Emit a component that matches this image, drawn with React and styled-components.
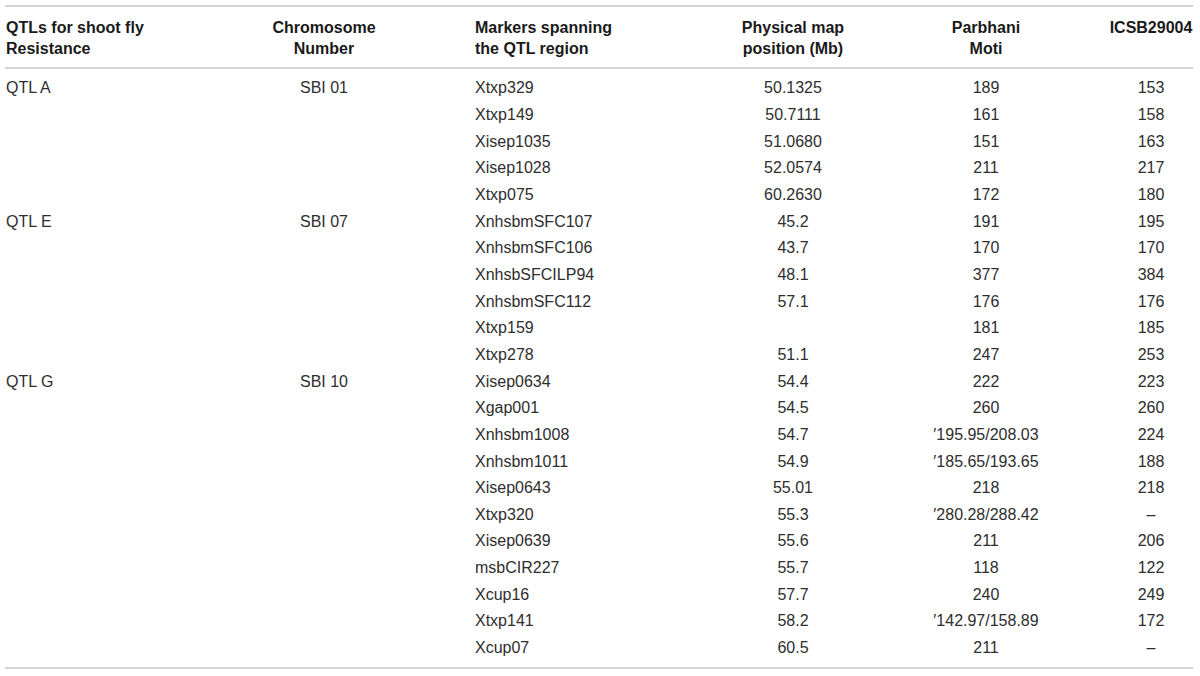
import React from "react";
import styled, { createGlobalStyle } from "styled-components";

const GlobalStyle = createGlobalStyle`
  body {
    margin: 0;
    background: #ffffff;
    font-family: "Liberation Sans", Arial, sans-serif;
  }
`;

const COLUMNS = "168px 302px 248px 140px 246px 84px";

const Table = styled.div`
  width: 1188px;
  margin: 5px 0 0 5px;
  border-top: 2px solid #d3d3d3;
  border-bottom: 2px solid #d3d3d3;
`;

const HeadRow = styled.div`
  display: grid;
  grid-template-columns: ${COLUMNS};
  padding: 10px 0 8px;
  border-bottom: 2px solid #d3d3d3;
  font-size: 16px;
  line-height: 21px;
  font-weight: bold;
  color: #1a1a1a;
`;

const Body = styled.div`
  padding: 6px 0;
`;

const Row = styled.div`
  display: grid;
  grid-template-columns: ${COLUMNS};
  height: 26.67px;
  align-items: center;
  font-size: 16px;
  color: #2e2e2e;
`;

const Cell = styled.div`
  text-align: ${(p) => p.$align || "left"};
  padding-left: ${(p) => (p.$first ? "1px" : "0")};
  white-space: nowrap;
`;

const rows = [
  ["QTL A", "SBI 01", "Xtxp329", "50.1325", "189", "153"],
  ["", "", "Xtxp149", "50.7111", "161", "158"],
  ["", "", "Xisep1035", "51.0680", "151", "163"],
  ["", "", "Xisep1028", "52.0574", "211", "217"],
  ["", "", "Xtxp075", "60.2630", "172", "180"],
  ["QTL E", "SBI 07", "XnhsbmSFC107", "45.2", "191", "195"],
  ["", "", "XnhsbmSFC106", "43.7", "170", "170"],
  ["", "", "XnhsbSFCILP94", "48.1", "377", "384"],
  ["", "", "XnhsbmSFC112", "57.1", "176", "176"],
  ["", "", "Xtxp159", "", "181", "185"],
  ["", "", "Xtxp278", "51.1", "247", "253"],
  ["QTL G", "SBI 10", "Xisep0634", "54.4", "222", "223"],
  ["", "", "Xgap001", "54.5", "260", "260"],
  ["", "", "Xnhsbm1008", "54.7", "\u2032195.95/208.03", "224"],
  ["", "", "Xnhsbm1011", "54.9", "\u2032185.65/193.65", "188"],
  ["", "", "Xisep0643", "55.01", "218", "218"],
  ["", "", "Xtxp320", "55.3", "\u2032280.28/288.42", "\u2013"],
  ["", "", "Xisep0639", "55.6", "211", "206"],
  ["", "", "msbCIR227", "55.7", "118", "122"],
  ["", "", "Xcup16", "57.7", "240", "249"],
  ["", "", "Xtxp141", "58.2", "\u2032142.97/158.89", "172"],
  ["", "", "Xcup07", "60.5", "211", "\u2013"],
];

const aligns = ["left", "center", "left", "center", "center", "center"];

export default function App() {
  return (
    <>
      <GlobalStyle />
      <Table>
        <HeadRow>
          <Cell $first>
            QTLs for shoot fly
            <br />
            Resistance
          </Cell>
          <Cell $align="center">
            Chromosome
            <br />
            Number
          </Cell>
          <Cell>
            Markers spanning
            <br />
            the QTL region
          </Cell>
          <Cell $align="center">
            Physical map
            <br />
            position (Mb)
          </Cell>
          <Cell $align="center">
            Parbhani
            <br />
            Moti
          </Cell>
          <Cell $align="center">ICSB29004</Cell>
        </HeadRow>
        <Body>
          {rows.map((r, i) => (
            <Row key={i}>
              {r.map((v, j) => (
                <Cell key={j} $align={aligns[j]} $first={j === 0}>
                  {v}
                </Cell>
              ))}
            </Row>
          ))}
        </Body>
      </Table>
    </>
  );
}
